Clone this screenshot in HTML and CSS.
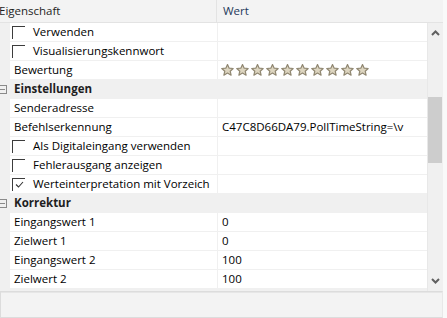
FILE: index.html
```html
<!DOCTYPE html>
<html>
<head>
<meta charset="utf-8">
<link rel="stylesheet" href="styles.css">
</head>
<body>
<div class="frame">
  <div class="main">
    <div class="header">
      <div class="hcell hname">Eigenschaft</div>
      <div class="hcell hval">Wert</div>
    </div>
    <div class="body">
      <div class="list">
        <div class="row"><div class="gutter"></div><div class="name chk"><span class="box"></span>Verwenden</div><div class="val"></div></div>
        <div class="row"><div class="gutter"></div><div class="name chk"><span class="box"></span>Visualisierungskennwort</div><div class="val"></div></div>
        <div class="row"><div class="gutter"></div><div class="name">Bewertung</div><div class="val stars">
          <svg class="star" viewBox="0 0 13 12"><path d="M6.5 0.6 L8.2 4.2 L12.2 4.5 L9.2 7.2 L10.1 11.2 L6.5 9.1 L2.9 11.2 L3.8 7.2 L0.8 4.5 L4.8 4.2 Z"/></svg>
          <svg class="star" viewBox="0 0 13 12"><path d="M6.5 0.6 L8.2 4.2 L12.2 4.5 L9.2 7.2 L10.1 11.2 L6.5 9.1 L2.9 11.2 L3.8 7.2 L0.8 4.5 L4.8 4.2 Z"/></svg>
          <svg class="star" viewBox="0 0 13 12"><path d="M6.5 0.6 L8.2 4.2 L12.2 4.5 L9.2 7.2 L10.1 11.2 L6.5 9.1 L2.9 11.2 L3.8 7.2 L0.8 4.5 L4.8 4.2 Z"/></svg>
          <svg class="star" viewBox="0 0 13 12"><path d="M6.5 0.6 L8.2 4.2 L12.2 4.5 L9.2 7.2 L10.1 11.2 L6.5 9.1 L2.9 11.2 L3.8 7.2 L0.8 4.5 L4.8 4.2 Z"/></svg>
          <svg class="star" viewBox="0 0 13 12"><path d="M6.5 0.6 L8.2 4.2 L12.2 4.5 L9.2 7.2 L10.1 11.2 L6.5 9.1 L2.9 11.2 L3.8 7.2 L0.8 4.5 L4.8 4.2 Z"/></svg>
          <svg class="star" viewBox="0 0 13 12"><path d="M6.5 0.6 L8.2 4.2 L12.2 4.5 L9.2 7.2 L10.1 11.2 L6.5 9.1 L2.9 11.2 L3.8 7.2 L0.8 4.5 L4.8 4.2 Z"/></svg>
          <svg class="star" viewBox="0 0 13 12"><path d="M6.5 0.6 L8.2 4.2 L12.2 4.5 L9.2 7.2 L10.1 11.2 L6.5 9.1 L2.9 11.2 L3.8 7.2 L0.8 4.5 L4.8 4.2 Z"/></svg>
          <svg class="star" viewBox="0 0 13 12"><path d="M6.5 0.6 L8.2 4.2 L12.2 4.5 L9.2 7.2 L10.1 11.2 L6.5 9.1 L2.9 11.2 L3.8 7.2 L0.8 4.5 L4.8 4.2 Z"/></svg>
          <svg class="star" viewBox="0 0 13 12"><path d="M6.5 0.6 L8.2 4.2 L12.2 4.5 L9.2 7.2 L10.1 11.2 L6.5 9.1 L2.9 11.2 L3.8 7.2 L0.8 4.5 L4.8 4.2 Z"/></svg>
          <svg class="star" viewBox="0 0 13 12"><path d="M6.5 0.6 L8.2 4.2 L12.2 4.5 L9.2 7.2 L10.1 11.2 L6.5 9.1 L2.9 11.2 L3.8 7.2 L0.8 4.5 L4.8 4.2 Z"/></svg>
        </div></div>
        <div class="row cat"><div class="gutter"><svg class="tog" viewBox="0 0 9 9"><rect x="0.5" y="0.5" width="8" height="8"/><path d="M2 4.5 H7"/></svg></div><div class="catname">Einstellungen</div></div>
        <div class="row"><div class="gutter"></div><div class="name">Senderadresse</div><div class="val"></div></div>
        <div class="row"><div class="gutter"></div><div class="name">Befehlserkennung</div><div class="val">C47C8D66DA79.PollTimeString=\v</div></div>
        <div class="row"><div class="gutter"></div><div class="name chk"><span class="box"></span>Als Digitaleingang verwenden</div><div class="val"></div></div>
        <div class="row"><div class="gutter"></div><div class="name chk"><span class="box"></span>Fehlerausgang anzeigen</div><div class="val"></div></div>
        <div class="row"><div class="gutter"></div><div class="name chk"><span class="box"><svg class="tick" viewBox="0 0 9 7"><path d="M1 3.5 L3.5 6 L8 1"/></svg></span>Werteinterpretation mit Vorzeich</div><div class="val"></div></div>
        <div class="row cat"><div class="gutter"><svg class="tog" viewBox="0 0 9 9"><rect x="0.5" y="0.5" width="8" height="8"/><path d="M2 4.5 H7"/></svg></div><div class="catname">Korrektur</div></div>
        <div class="row"><div class="gutter"></div><div class="name">Eingangswert 1</div><div class="val">0</div></div>
        <div class="row"><div class="gutter"></div><div class="name">Zielwert 1</div><div class="val">0</div></div>
        <div class="row"><div class="gutter"></div><div class="name">Eingangswert 2</div><div class="val">100</div></div>
        <div class="row"><div class="gutter"></div><div class="name">Zielwert 2</div><div class="val">100</div></div>
      </div>
      <div class="scroll">
        <svg class="arrow" viewBox="0 0 9 6"><path d="M1 5 L4.5 1.5 L8 5"/></svg>
        <div class="track"><div class="thumb"></div></div>
        <svg class="arrow" viewBox="0 0 9 6"><path d="M1 1 L4.5 4.5 L8 1"/></svg>
      </div>
    </div>
    <div class="desc"></div>
  </div>
  <div class="edge"></div>
</div>
</body>
</html>
```
FILE: styles.css
```css
* { box-sizing: border-box; }
html, body { margin: 0; padding: 0; }
body {
  width: 447px;
  height: 318px;
  overflow: hidden;
  background: #f0f0f0;
  font-family: "Open Sans", "Noto Sans", sans-serif;
  font-size: 11.5px;
  color: #000;
}
.frame { display: flex; height: 318px; }
.main { width: 443px; display: flex; flex-direction: column; }
.edge { width: 4px; background: #f9f9f9; }
.header {
  display: flex;
  height: 23px;
  flex: none;
  background: #f3f3f3;
  border-bottom: 1px solid #e3e3e3;
}
.hcell { line-height: 22px; color: #1e1e1e; }
.hname { width: 218px; margin-left: -1px; border-right: 1px solid #e3e3e3; }
.hval { padding-left: 6px; color: #1e395b; }
.body { display: flex; height: 268px; flex: none; }
.list { width: 427px; display: flex; flex-direction: column; }
.row { display: flex; height: 19px; flex: none; border-bottom: 1px solid #f0f0f0; }
.gutter { width: 10px; background: #f0f0f0; position: relative; }
.name {
  width: 208px;
  background: #fff;
  border-right: 1px solid #f0f0f0;
  line-height: 18px;
  padding-left: 4px;
  white-space: nowrap;
  overflow: hidden;
  display: flex;
  align-items: center;
}
.name.chk { padding-left: 2px; }
.val {
  flex: 1;
  background: #fff;
  line-height: 18px;
  padding-left: 4px;
  white-space: nowrap;
  overflow: hidden;
  display: flex;
  align-items: center;
}
.box {
  width: 13px;
  height: 13px;
  border-top: 1px solid #3c3c3c;
  border-left: 1px solid #3c3c3c;
  margin-right: 8px;
  flex: none;
  display: flex;
  align-items: center;
  justify-content: center;
}
.tick { width: 9px; height: 7px; fill: none; stroke: #333; stroke-width: 1.1; }
.cat { background: #f0f0f0; border-bottom-color: #f0f0f0; }
.catname {
  flex: 1;
  background: #f0f0f0;
  font-weight: 700;
  color: #1e1e1e;
  line-height: 18px;
  padding-left: 4px;
}
.tog {
  position: absolute;
  left: -2px;
  top: 5px;
  width: 9px;
  height: 9px;
  fill: none;
  stroke: #8a8a8a;
  stroke-width: 1;
}
.stars { padding-left: 3px; gap: 2px; }
.star { width: 13px; height: 12px; flex: none; fill: #ddd5c0; stroke: #8f8670; stroke-width: 1.2; stroke-linejoin: round; }
.scroll {
  width: 16px;
  background: #f0f0f0;
  border-left: 1px solid #e8e8e8;
  display: flex;
  flex-direction: column;
  align-items: center;
}
.arrow { width: 9px; height: 6px; margin: 7px 0; fill: none; stroke: #606060; stroke-width: 2; }
.track { flex: 1; width: 100%; padding-top: 54px; }
.thumb { height: 66px; background: #cdcdcd; margin-right: 1px; }
.desc {
  flex: 1;
  border: 1px solid #dcdcdc;
  border-right-color: #e8e8e8;
  background: #f3f3f3;
  box-shadow: inset 0 1px 0 #e6e6e6;
}
```
